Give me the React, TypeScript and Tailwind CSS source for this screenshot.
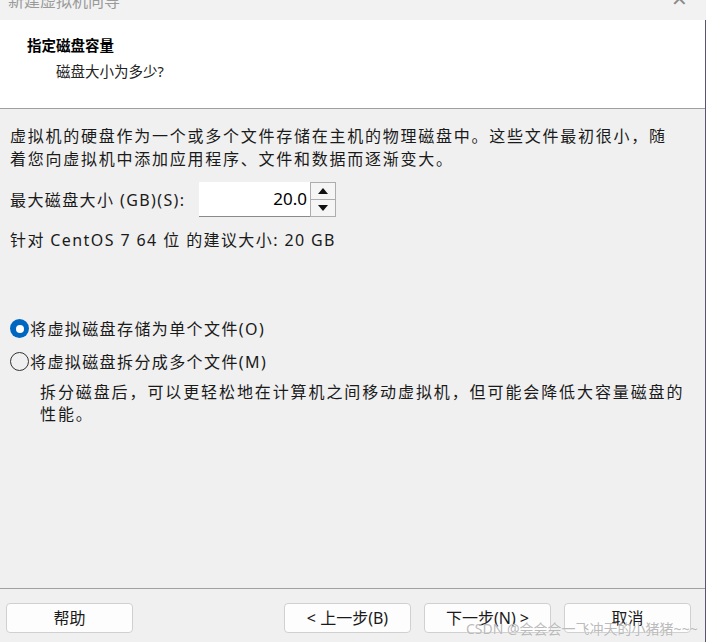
import React from 'react';

const font = { fontFamily: '"Noto Sans", "Noto Sans CJK SC", sans-serif' };

const Radio = ({ checked, label }: { checked?: boolean; label: string }) => (
    <div className="flex items-center h-[33px]">
        <span
            className={`w-[19px] h-[19px] rounded-full flex items-center justify-center shrink-0 ${checked ? 'bg-[#0067c0]' : 'border border-[#333333] bg-[#f0f0f0]'}`}
        >
            {checked && <span className="w-[8px] h-[8px] rounded-full bg-white" />}
        </span>
        <span className="ml-[1px]">{label}</span>
    </div>
);

const Btn = ({ children, className = '' }: { children: React.ReactNode; className?: string }) => (
    <button className={`w-[127px] h-[30px] bg-[#fdfdfd] border border-[#d0d0d0] rounded-[4px] text-[16px] text-[#1a1a1a] flex items-center justify-center ${className}`}>
        {children}
    </button>
);

export default function App() {
    return (
        <div className="relative w-[706px] h-[642px] bg-[#f0f0f0] flex flex-col overflow-hidden text-[#1a1a1a]" style={font}>
            <div className="h-[20px] bg-[#f2f2f2] flex items-start justify-between px-[8px] overflow-hidden shrink-0">
                <span className="text-[16px] text-[#9a9a9a] leading-none -mt-[7px]">新建虚拟机向导</span>
                <span className="text-[20px] text-[#8a8a8a] leading-none mr-[10px] -mt-[11px]">✕</span>
            </div>

            <div className="flex-1 flex flex-col border-r border-[#5b5370]">
                <div className="h-[89px] bg-white border-b border-[#a0a0a0] pt-[14px] shrink-0">
                    <div className="ml-[27px] text-[14.5px] font-bold leading-[22px] text-black">指定磁盘容量</div>
                    <div className="ml-[56px] mt-[4px] text-[14.5px] leading-[22px] text-[#222]">磁盘大小为多少?</div>
                </div>

                <div className="flex-1 pl-[10px] pt-[16px] text-[16px] tracking-[1.4px]">
                    <div className="leading-[23px] tracking-[1.75px]">
                        虚拟机的硬盘作为一个或多个文件存储在主机的物理磁盘中。这些文件最初很小，随
                        <br />
                        着您向虚拟机中添加应用程序、文件和数据而逐渐变大。
                    </div>

                    <div className="flex items-center mt-[11px] h-[35px]">
                        <span className="w-[189px] shrink-0">最大磁盘大小 (GB)(S):</span>
                        <div className="flex h-[35px]">
                            <div className="w-[111px] bg-white border-b border-[#8a8a8a] flex items-center justify-end pr-[3px] text-[17px] tracking-normal text-black">
                                20.0
                            </div>
                            <div className="w-[26px] flex flex-col border border-[#adadad]">
                                <div className="flex-1 flex items-center justify-center border-b border-[#adadad] bg-[#f5f5f5]">
                                    <svg width="10" height="6" viewBox="0 0 10 6"><path d="M0 6 L5 0 L10 6 Z" fill="#111" /></svg>
                                </div>
                                <div className="flex-1 flex items-center justify-center bg-[#f5f5f5]">
                                    <svg width="10" height="6" viewBox="0 0 10 6"><path d="M0 0 L5 6 L10 0 Z" fill="#111" /></svg>
                                </div>
                            </div>
                        </div>
                    </div>

                    <div className="mt-[12px] leading-[23px]">针对 CentOS 7 64 位 的建议大小: 20 GB</div>

                    <div className="mt-[60px]">
                        <Radio checked label="将虚拟磁盘存储为单个文件(O)" />
                        <Radio label="将虚拟磁盘拆分成多个文件(M)" />
                    </div>

                    <div className="ml-[30px] mt-[3px] leading-[22px] tracking-[1.9px]">
                        拆分磁盘后，可以更轻松地在计算机之间移动虚拟机，但可能会降低大容量磁盘的
                        <br />
                        性能。
                    </div>
                </div>

                <div className="h-[54px] border-t border-[#a0a0a0] flex items-start pt-[14px] px-[6px] shrink-0">
                    <Btn>帮助</Btn>
                    <div className="flex-1" />
                    <Btn>&lt; 上一步(B)</Btn>
                    <Btn className="ml-[13px]">下一步(N) &gt;</Btn>
                    <Btn className="ml-[13px] mr-[8px]">取消</Btn>
                </div>
            </div>

            <div className="absolute left-[466px] top-[618px] text-[14px] text-[#a8a8a8]/80 pointer-events-none" style={{ textShadow: '0 0 1px #fff' }}>
                CSDN @会会会一飞冲天的小猪猪~~~
            </div>
        </div>
    );
}
